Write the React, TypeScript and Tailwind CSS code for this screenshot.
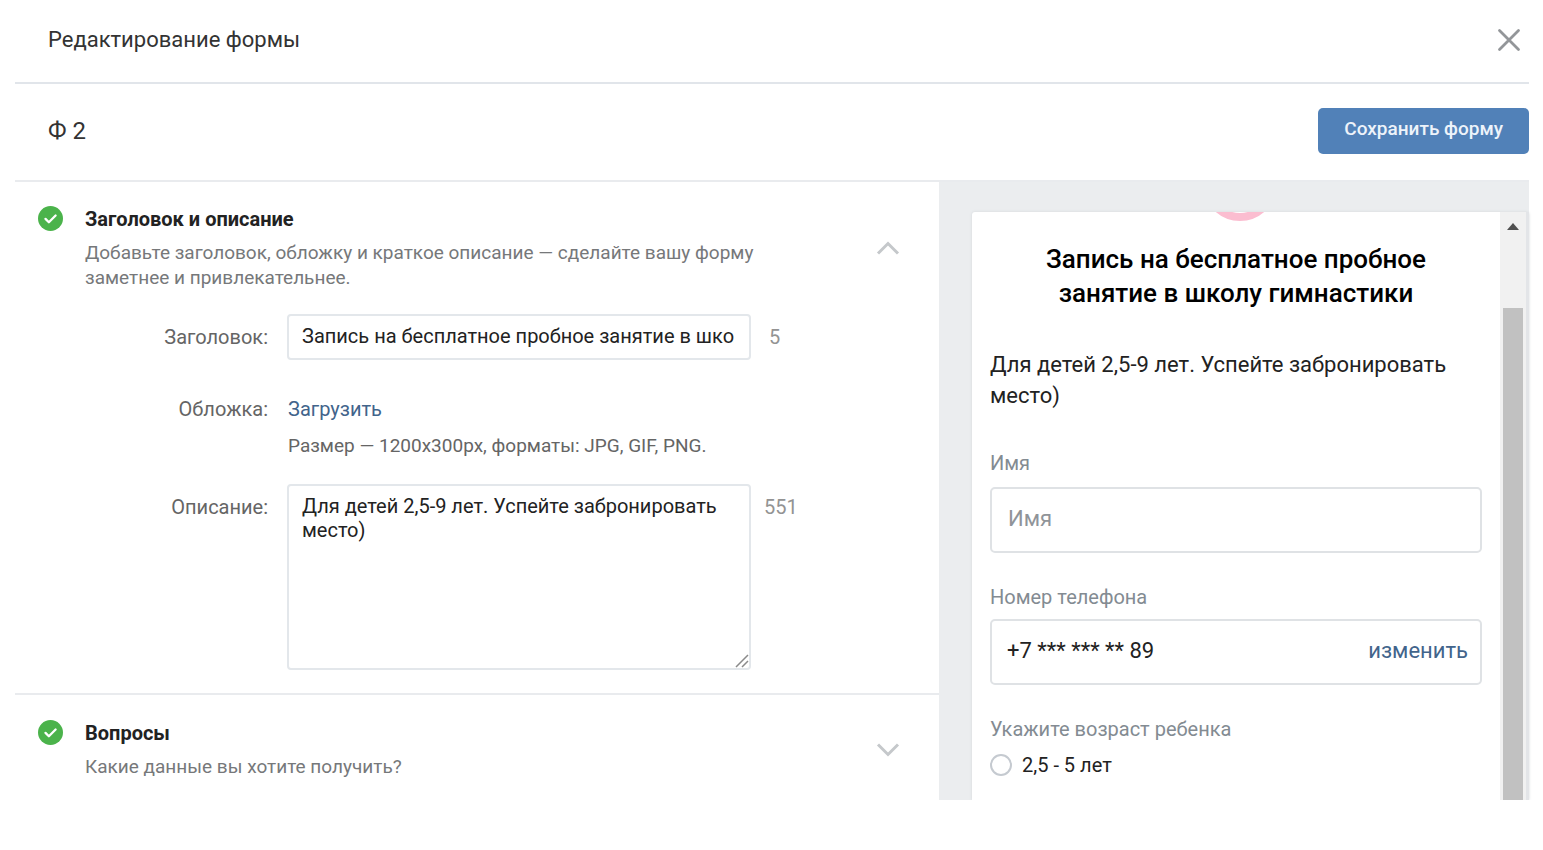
import React, { useState } from 'react';

interface SectionHeadProps {
  title: string;
  text: string;
  open: boolean;
}

function CheckBadge() {
  return (
    <svg className="h-[25px] w-[25px] shrink-0" viewBox="0 0 26 26" fill="none" aria-hidden="true">
      <circle cx="13" cy="13" r="13" fill="#4bb34b" />
      <path d="M7.8 13.4l3.5 3.5 7-7" stroke="#fff" strokeWidth="2.4" strokeLinecap="round" strokeLinejoin="round" />
    </svg>
  );
}

function SectionHead({ title, text, open }: SectionHeadProps) {
  return (
    <div className="flex items-start">
      <CheckBadge />
      <div className="ml-[22px] flex-1">
        <h2 className="text-[20px] leading-[26px] font-bold text-[#222]">{title}</h2>
        <p className="mt-2 max-w-[700px] text-[19px] leading-[25px] text-[#76787a]">{text}</p>
      </div>
      <button type="button" aria-label={title} aria-expanded={open} className="mr-[39px] self-center">
        <svg className="h-[14px] w-6" viewBox="0 0 24 14" fill="none" stroke="#c5c8cb" strokeWidth="3">
          <path d={open ? 'M2 12.5L12 2.5l10 10' : 'M2 1.5l10 10 10-10'} />
        </svg>
      </button>
    </div>
  );
}

export default function App() {
  const [title, setTitle] = useState('Запись на бесплатное пробное занятие в школу гимнастики');
  const [description, setDescription] = useState('Для детей 2,5-9 лет. Успейте забронировать место)');

  return (
    <div className="bg-white pr-[14px] pl-[15px] font-['Roboto',sans-serif] text-[#222]">
      <header className="flex h-[84px] items-center justify-between border-b-2 border-[#e1e5ea] pr-2 pb-[3px] pl-[33px]">
        <h1 className="text-[22px] leading-[26px] text-[#333]">Редактирование формы</h1>
        <button type="button" aria-label="Закрыть">
          <svg className="h-6 w-6" viewBox="0 0 24 24" fill="none" stroke="#939699" strokeWidth="2.8" strokeLinecap="round">
            <path d="M2.5 2.5l19 19M21.5 2.5l-19 19" />
          </svg>
        </button>
      </header>

      <div className="flex h-[98px] items-center justify-between border-b-2 border-[#e9ebee] pb-[3px] pl-[33px]">
        <span className="text-[24px] leading-7 text-[#333]">Ф 2</span>
        <button type="button" className="h-[46px] rounded-[5px] bg-[#5181b8] px-[26px] pb-[2px] text-[19px] font-medium text-[#edf3fa]">
          Сохранить форму
        </button>
      </div>

      <div className="flex">
        <main className="min-w-0 flex-1">
          <section className="border-b-2 border-[#e9ebee] pt-6 pb-[23px] pl-[23px]">
            <SectionHead
              title="Заголовок и описание"
              text="Добавьте заголовок, обложку и краткое описание — сделайте вашу форму заметнее и привлекательнее."
              open
            />

            <div className="mt-6 grid grid-cols-[230px_483px_1fr] text-[20px]">
              <label htmlFor="title" className="pt-[11px] text-right leading-6 text-[#656565]">Заголовок:</label>
              <div className="pl-[19px]">
                <input
                  id="title"
                  value={title}
                  onChange={(e) => setTitle(e.target.value)}
                  className="block h-[46px] w-full rounded-[4px] border-2 border-[#e3e7eb] pr-[15px] pb-[2px] pl-[13px] text-[#222] outline-none"
                />
              </div>
              <span className="pt-[11px] pl-[18px] leading-6 text-[#939393]">5</span>

              <span className="mt-[37px] text-right leading-6 text-[#656565]">Обложка:</span>
              <div className="col-span-2 mt-[37px] pl-5 leading-6">
                <a href="#upload" className="text-[#42648b]">Загрузить</a>
                <p className="mt-[13px] text-[19px] text-[#656565]">Размер — 1200х300px, форматы: JPG, GIF, PNG.</p>
              </div>

              <label htmlFor="description" className="mt-[26px] pt-[11px] text-right leading-6 text-[#656565]">Описание:</label>
              <div className="relative mt-[26px] pl-[19px]">
                <textarea
                  id="description"
                  value={description}
                  onChange={(e) => setDescription(e.target.value)}
                  className="block h-[186px] w-full resize-none rounded-[4px] border-2 border-[#e3e7eb] px-[13px] py-2 leading-6 text-[#222] outline-none"
                />
                {/* Resize grip */}
                <svg className="absolute right-[2px] bottom-[2px] h-[14px] w-[14px]" viewBox="0 0 14 14" stroke="#8a8a8a" strokeWidth="1.5" aria-hidden="true">
                  <path d="M1 13L13 1M7 13l6-6" />
                </svg>
              </div>
              <span className="mt-[26px] pt-[11px] pl-[13px] leading-6 text-[#939393]">551</span>
            </div>
          </section>

          <section className="pt-[25px] pb-[21px] pl-[23px]">
            <SectionHead title="Вопросы" text="Какие данные вы хотите получить?" open={false} />
          </section>
        </main>

        <aside className="flex w-[590px] bg-[#ebedef] pt-[30px] pl-[33px]">
          <div className="flex flex-1 rounded-t-[3px] bg-white shadow-[0_0_3px_#d3d6da]">
            <div className="min-w-0 flex-1 px-[18px]">
              <svg className="mx-auto h-[10px] w-[60px]" viewBox="0 0 60 10" fill="none" aria-hidden="true">
                <circle cx="34" cy="-28" r="33" stroke="#fbbdd0" strokeWidth="8" />
              </svg>
              <h2 className="mt-5 px-8 text-center text-[26px] leading-[34px] font-medium text-black">
                Запись на бесплатное пробное занятие в школу гимнастики
              </h2>
              <p className="mt-[39px] text-[22px] leading-[31px] text-[#222]">{description}</p>

              <label htmlFor="name" className="mt-10 block text-[20px] leading-6 text-[#838b92]">Имя</label>
              <input
                id="name"
                placeholder="Имя"
                className="mt-3 block h-[66px] w-full rounded-[5px] border-2 border-[#dfe2e5] px-4 pb-1 text-[22px] outline-none placeholder:text-[#909499]"
              />

              <label htmlFor="phone" className="mt-8 block text-[20px] leading-6 text-[#838b92]">Номер телефона</label>
              <div className="mt-[10px] flex h-[66px] items-center rounded-[5px] border-2 border-[#dfe2e5] pr-3 pb-1 pl-[15px] text-[22px]">
                <input id="phone" readOnly value="+7 *** *** ** 89" className="min-w-0 flex-1 outline-none" />
                <a href="#change" className="text-[#42648b]">изменить</a>
              </div>

              <fieldset className="mt-8">
                <legend className="text-[20px] leading-6 text-[#838b92]">Укажите возраст ребенка</legend>
                <label className="mt-3 flex items-center gap-[10px] text-[20px] leading-6">
                  <input type="radio" name="age" className="h-[22px] w-[22px] appearance-none rounded-full border-2 border-[#c5cad0] bg-white" />
                  2,5 - 5 лет
                </label>
              </fieldset>
            </div>

            {/* Preview scrollbar */}
            <div className="flex w-[29px] flex-col items-center border-r-3 border-[#e3e5e8] bg-[#f1f1f1]">
              <svg className="mt-[11px] h-[7px] w-3" viewBox="0 0 12 7" aria-hidden="true">
                <path d="M0 7l6-7 6 7z" fill="#505050" />
              </svg>
              <div className="mt-[78px] w-5 flex-1 bg-[#c1c1c1]" />
            </div>
          </div>
        </aside>
      </div>
    </div>
  );
}
